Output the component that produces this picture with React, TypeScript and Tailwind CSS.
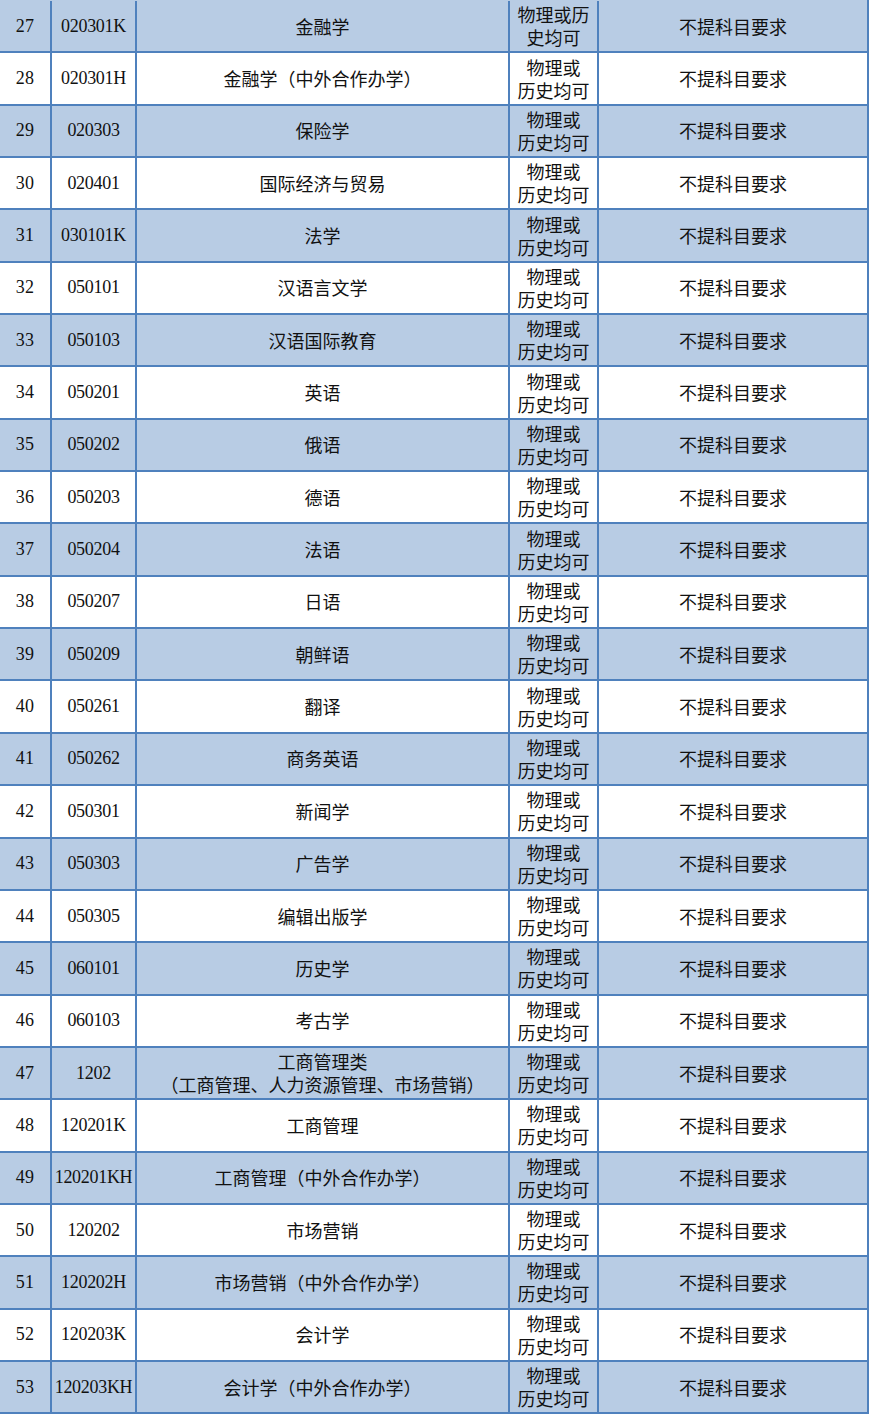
import React from "react";

type Row = { n: number; code: string; name: React.ReactNode; subj?: "wide" };

const rows: Row[] = [
  { n: 27, code: "020301K", name: "金融学", subj: "wide" },
  { n: 28, code: "020301H", name: "金融学（中外合作办学）" },
  { n: 29, code: "020303", name: "保险学" },
  { n: 30, code: "020401", name: "国际经济与贸易" },
  { n: 31, code: "030101K", name: "法学" },
  { n: 32, code: "050101", name: "汉语言文学" },
  { n: 33, code: "050103", name: "汉语国际教育" },
  { n: 34, code: "050201", name: "英语" },
  { n: 35, code: "050202", name: "俄语" },
  { n: 36, code: "050203", name: "德语" },
  { n: 37, code: "050204", name: "法语" },
  { n: 38, code: "050207", name: "日语" },
  { n: 39, code: "050209", name: "朝鲜语" },
  { n: 40, code: "050261", name: "翻译" },
  { n: 41, code: "050262", name: "商务英语" },
  { n: 42, code: "050301", name: "新闻学" },
  { n: 43, code: "050303", name: "广告学" },
  { n: 44, code: "050305", name: "编辑出版学" },
  { n: 45, code: "060101", name: "历史学" },
  { n: 46, code: "060103", name: "考古学" },
  {
    n: 47,
    code: "1202",
    name: (
      <>
        <span className="block">工商管理类</span>
        <span className="block">（工商管理、人力资源管理、市场营销）</span>
      </>
    ),
  },
  { n: 48, code: "120201K", name: "工商管理" },
  { n: 49, code: "120201KH", name: "工商管理（中外合作办学）" },
  { n: 50, code: "120202", name: "市场营销" },
  { n: 51, code: "120202H", name: "市场营销（中外合作办学）" },
  { n: 52, code: "120203K", name: "会计学" },
  { n: 53, code: "120203KH", name: "会计学（中外合作办学）" },
];

const serif = "font-['Liberation_Serif','Noto_Sans_CJK_SC',serif]";
const cjk = "font-['Noto_Sans_CJK_SC','Liberation_Sans',sans-serif]";

export default function App() {
  return (
    <div className="w-[872px] bg-white text-[#111] text-[18px] leading-[23px]">
      <div className="w-[869px] border-r-2 border-[#4f81bd] pt-[1px] bg-[#b8cce4]">
        {rows.map((r) => (
          <div
            key={r.n}
            className={`grid grid-cols-[52px_85px_373px_89px_268px] h-[52.35px] border-b-2 border-[#4f81bd] ${
              r.n % 2 === 1 ? "bg-[#b8cce4]" : "bg-white"
            }`}
          >
            <div className={`flex items-center justify-center border-r-2 border-[#4f81bd] tracking-[0.3px] ${serif}`}>
              {r.n}
            </div>
            <div className={`flex items-center justify-center border-r-2 border-[#4f81bd] tracking-[-0.3px] ${serif}`}>
              {r.code}
            </div>
            <div className={`flex flex-col items-center justify-center text-center border-r-2 border-[#4f81bd] ${cjk}`}>
              {r.name}
            </div>
            <div className={`flex flex-col items-center justify-center text-center border-r-2 border-[#4f81bd] ${cjk}`}>
              {r.subj === "wide" ? (
                <>
                  <span className="block">物理或历</span>
                  <span className="block">史均可</span>
                </>
              ) : (
                <>
                  <span className="block">物理或</span>
                  <span className="block">历史均可</span>
                </>
              )}
            </div>
            <div className={`flex items-center justify-center ${cjk}`}>不提科目要求</div>
          </div>
        ))}
      </div>
    </div>
  );
}
